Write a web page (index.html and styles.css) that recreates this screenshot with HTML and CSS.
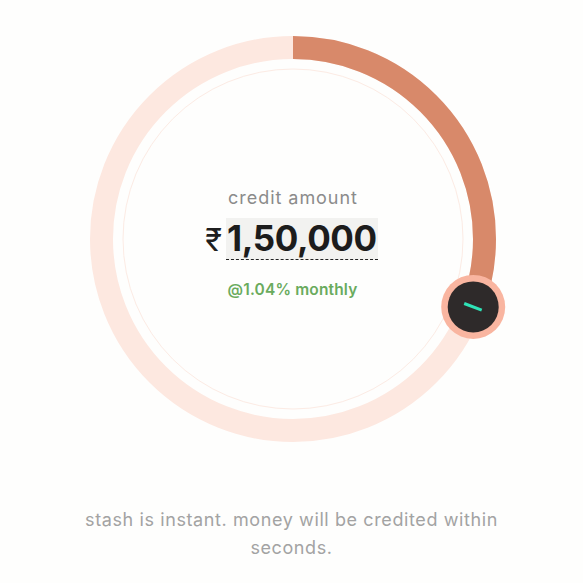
FILE: index.html
```html
<!DOCTYPE html>
<html lang="en">
<head>
<meta charset="utf-8">
<title>stash credit</title>
<link rel="stylesheet" href="styles.css">
</head>
<body>
<main class="page">
  <section class="dial">
    <svg class="dial-art" width="410" height="410" viewBox="0 0 410 410" aria-hidden="true">
      <circle cx="205" cy="205" r="191.5" fill="none" stroke="#fde8e0" stroke-width="23"/>
      <circle cx="205" cy="205" r="170" fill="none" stroke="#fcebe4" stroke-width="1"/>
      <circle cx="205" cy="205" r="191.5" fill="none" stroke="#d8896a" stroke-width="23"
              stroke-dasharray="370 1300" transform="rotate(-90 205 205)"/>
      <g transform="translate(385.2 272.9)">
        <circle r="32" fill="#f9b5a0"/>
        <circle r="25.5" fill="#2e2a2a"/>
        <line x1="-9" y1="-3.4" x2="8.5" y2="3.2" stroke="#2fe3b7" stroke-width="3" stroke-linecap="butt"/>
      </g>
    </svg>
    <div class="dial-info">
      <p class="label">credit amount</p>
      <div class="amount">
        <span class="rupee">₹</span>
        <span class="value">1,50,000</span>
      </div>
      <p class="rate">@1.04% monthly</p>
    </div>
  </section>
  <p class="note">stash is instant. money will be credited within seconds.</p>
</main>
</body>
</html>
```
FILE: styles.css
```css
* { box-sizing: border-box; }
html, body {
  margin: 0;
  background: #fefefd;
}
body {
  font-family: "Inter", "Lato", sans-serif;
}
.page {
  width: 583px;
  height: 583px;
  padding-top: 34px;
  display: flex;
  flex-direction: column;
  align-items: center;
}
.dial {
  display: grid;
  width: 410px;
  height: 410px;
  margin-left: 2px;
}
.dial-art {
  overflow: visible;
}
.dial-art, .dial-info {
  grid-area: 1 / 1;
}
.dial-info {
  display: flex;
  flex-direction: column;
  align-items: center;
  padding-top: 153px;
}
.label {
  margin: 0;
  font-size: 18px;
  line-height: 22px;
  color: #8b8b8b;
  letter-spacing: 0.95px;
  padding-left: 1px;
}
.amount {
  display: flex;
  align-items: center;
  margin-top: 9px;
  margin-left: -2px;
}
.rupee {
  font-size: 31px;
  line-height: 41px;
  color: #1f1f1f;
  margin-right: 4px;
}
.value {
  font-size: 35px;
  line-height: 41px;
  font-weight: 700;
  color: #1c1c1c;
  background: #f2f2f0;
  border-bottom: 1.5px dashed #222;
  padding: 0 1px;
  letter-spacing: -0.4px;
}
.rate {
  margin: 20px 0 0;
  font-size: 15.5px;
  line-height: 20px;
  font-weight: 600;
  color: #6aab5d;
  letter-spacing: 0.15px;
}
.note {
  margin: 62px 0 0;
  width: 440px;
  text-align: center;
  font-size: 18px;
  line-height: 28px;
  color: #a3a3a3;
  letter-spacing: 0.6px;
}
```
